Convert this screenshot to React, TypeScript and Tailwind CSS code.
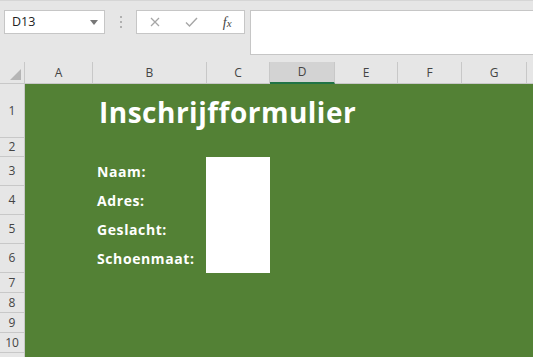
import React from "react";

const cols = [
  { l: "A", w: 68 },
  { l: "B", w: 114 },
  { l: "C", w: 63 },
  { l: "D", w: 65 },
  { l: "E", w: 63 },
  { l: "F", w: 64 },
  { l: "G", w: 65 },
  { l: "", w: 65 },
];

const rows = [
  { n: "1", h: 54 },
  { n: "2", h: 19 },
  { n: "3", h: 29 },
  { n: "4", h: 29 },
  { n: "5", h: 29 },
  { n: "6", h: 29 },
  { n: "7", h: 20 },
  { n: "8", h: 20 },
  { n: "9", h: 20 },
  { n: "10", h: 20 },
  { n: "", h: 20 },
];

export default function App() {
  const ui = { fontFamily: '"Open Sans", "Liberation Sans", sans-serif' };
  return (
    <div className="w-[533px] h-[357px] overflow-hidden bg-[#e6e6e6] flex flex-col" style={ui}>
      {/* toolbar */}
      <div className="h-[62px] shrink-0 flex items-start pt-[9px] pl-[4px] border-t border-[#d6d6d6]">
        <div className="w-[101px] h-[24px] bg-white border border-[#c6c6c6] flex items-center justify-between pl-[7px] pr-[6px]">
          <span className="text-[12.5px] text-[#222]">D13</span>
          <svg width="8" height="5" viewBox="0 0 8 5"><path d="M0 0h8L4 5z" fill="#777" /></svg>
        </div>
        <div className="w-[31px] h-[24px] flex flex-col items-center justify-center gap-[3px]">
          <div className="w-[2px] h-[2px] bg-[#b0b0b0]" />
          <div className="w-[2px] h-[2px] bg-[#b0b0b0]" />
          <div className="w-[2px] h-[2px] bg-[#b0b0b0]" />
        </div>
        <div className="w-[109px] h-[24px] bg-white border border-[#c6c6c6] flex items-center">
          <div className="w-[36px] flex justify-center">
            <svg width="10" height="10" viewBox="0 0 10 10"><path d="M1 1L9 9M9 1L1 9" stroke="#a6a6a6" strokeWidth="1.3" /></svg>
          </div>
          <div className="w-[38px] flex justify-center">
            <svg width="13" height="10" viewBox="0 0 13 10"><path d="M1 5.5L4.5 9L12 1" stroke="#a6a6a6" strokeWidth="1.4" fill="none" /></svg>
          </div>
          <div className="w-[34px] flex justify-center">
            <span className="text-[14px] italic text-[#444]" style={{ fontFamily: '"Liberation Serif", serif' }}>f<span className="text-[11px]">x</span></span>
          </div>
        </div>
        <div className="ml-[5px] flex-1 h-[45px] bg-white border-t border-b border-l border-[#c6c6c6]" />
      </div>

      {/* column header row */}
      <div className="h-[22px] shrink-0 flex bg-[#e6e6e6] text-[12px] text-[#444]">
        <div className="w-[25px] shrink-0 relative border-r border-[#c8c8c8] border-b border-b-[#c8c8c8]">
          <svg className="absolute right-[3px] bottom-[3px]" width="11" height="11" viewBox="0 0 11 11"><path d="M11 0V11H0z" fill="#b5b5b5" /></svg>
        </div>
        {cols.map((c, i) => (
          <div
            key={i}
            style={{ width: c.w }}
            className={
              c.l === "D"
                ? "shrink-0 flex items-center justify-center bg-[#d3d3d3] border-r border-[#c8c8c8] border-b-2 border-b-[#217346]"
                : "shrink-0 flex items-center justify-center border-r border-[#c8c8c8] border-b border-b-[#c8c8c8]"
            }
          >
            {c.l}
          </div>
        ))}
      </div>

      {/* body */}
      <div className="flex flex-1">
        <div className="w-[25px] shrink-0 flex flex-col text-[12px] text-[#444]">
          {rows.map((r, i) => (
            <div
              key={i}
              style={{ height: r.h }}
              className="shrink-0 flex items-center justify-center border-b border-[#c8c8c8] border-r border-r-[#c8c8c8] bg-[#e6e6e6]"
            >
              {r.n}
            </div>
          ))}
        </div>
        <div
          className="flex-1 bg-[#538135] grid content-start text-white"
          style={{ gridTemplateColumns: "68px 113px 64px 1fr", gridTemplateRows: "54px 19px 29px 29px 29px 29px" }}
        >
          <div className="col-start-2 col-span-3 row-start-1 flex items-center pl-[6px] pt-[1px] font-bold text-[28px] tracking-[0.5px] whitespace-nowrap">
            Inschrijfformulier
          </div>
          <div className="col-start-2 row-start-3 flex items-center pl-[4px] font-bold text-[14px] tracking-[0.6px]">Naam:</div>
          <div className="col-start-2 row-start-4 flex items-center pl-[4px] font-bold text-[14px] tracking-[0.6px]">Adres:</div>
          <div className="col-start-2 row-start-5 flex items-center pl-[4px] font-bold text-[14px] tracking-[0.6px]">Geslacht:</div>
          <div className="col-start-2 row-start-6 flex items-center pl-[4px] font-bold text-[14px] tracking-[0.6px] whitespace-nowrap">Schoenmaat:</div>
          <div className="col-start-3 row-start-3 row-span-4 bg-white" />
        </div>
      </div>
    </div>
  );
}
